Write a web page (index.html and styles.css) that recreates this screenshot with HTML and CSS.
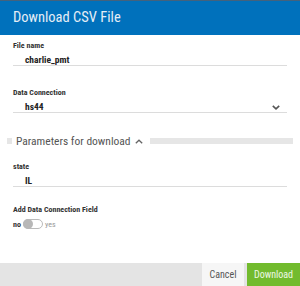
FILE: index.html
```html
<!DOCTYPE html>
<html>
<head>
<meta charset="utf-8">
<link rel="stylesheet" href="styles.css">
</head>
<body>
<div class="dialog">
  <div class="header">Download CSV File</div>
  <div class="content">
    <div class="field field-first">
      <div class="label">File name</div>
      <div class="value">charlie_pmt</div>
    </div>
    <div class="field">
      <div class="label">Data Connection</div>
      <div class="value select">
        <span>hs44</span>
        <svg class="chev" width="8" height="5" viewBox="0 0 8 5"><path d="M0.8 0.8 L4 3.8 L7.2 0.8" fill="none" stroke="#555" stroke-width="1.6"/></svg>
      </div>
    </div>
    <div class="section">
      <div class="band band-left"></div>
      <div class="legend">
        <span>Parameters for download</span>
        <svg class="chev-up" width="8" height="5" viewBox="0 0 8 5"><path d="M0.8 4.2 L4 1.2 L7.2 4.2" fill="none" stroke="#666" stroke-width="1.3"/></svg>
      </div>
      <div class="band band-right"></div>
    </div>
    <div class="field field-state">
      <div class="label">state</div>
      <div class="value">IL</div>
    </div>
    <div class="toggle-field">
      <div class="label">Add Data Connection Field</div>
      <div class="toggle-row">
        <span class="no">no</span>
        <span class="track"><span class="knob"></span></span>
        <span class="yes">yes</span>
      </div>
    </div>
  </div>
  <div class="footer">
    <button class="btn cancel">Cancel</button>
    <button class="btn download">Download</button>
  </div>
</div>
</body>
</html>
```
FILE: styles.css
```css
* { box-sizing: border-box; }
html, body { margin: 0; padding: 0; background: #fff; }
body {
  font-family: "Roboto Condensed", "Liberation Sans Narrow", "DejaVu Sans Condensed", Roboto, sans-serif;
  width: 300px;
  height: 286px;
  overflow: hidden;
}
.dialog {
  display: flex;
  flex-direction: column;
  height: 286px;
  border-top: 1px solid #44627d;
}
.header {
  background: #0071bc;
  color: #e4edf6;
  height: 34px;
  line-height: 34px;
  padding-left: 13px;
  font-size: 14.5px;
  flex: none;
}
.content {
  flex: 1;
  padding: 0 13px;
}
.field { border-bottom: 1px solid #dcdcdc; }
.field-first { margin-top: 6px; }
.field + .field { margin-top: 22px; }
.label {
  font-size: 8px;
  font-weight: bold;
  color: #333;
  line-height: 10px;
  height: 10px;
}
.value {
  font-size: 9.5px;
  font-weight: bold;
  color: #222;
  padding-left: 12px;
  line-height: 12px;
  height: 14px;
  padding-top: 3px;
}
.select {
  display: flex;
  justify-content: space-between;
  align-items: flex-start;
  padding-right: 7px;
}
.chev { margin-top: 4px; }
.section {
  display: flex;
  align-items: center;
  margin: 21px -6px 0 -6px;
  height: 14px;
}
.band { height: 6px; background: #e6e6e6; }
.band-left { width: 5px; flex: none; }
.band-right { flex: 1; }
.legend {
  display: flex;
  align-items: center;
  padding: 0 7px 0 4px;
  font-size: 11.5px;
  color: #555;
  line-height: 14px;
}
.chev-up { margin-left: 4px; }
.field-state { margin-top: 14px; }
.toggle-field { margin-top: 18px; }
.toggle-row {
  display: flex;
  align-items: center;
  margin-top: 3px;
  height: 12px;
}
.no { font-size: 8px; font-weight: bold; color: #333; }
.yes { font-size: 8px; color: #999; }
.track {
  width: 20px;
  height: 10px;
  border: 1px solid #bbb;
  border-radius: 6px;
  margin: 0 2px 0 2px;
  position: relative;
  background: #fff;
}
.knob {
  position: absolute;
  left: -1px;
  top: -1px;
  width: 10px;
  height: 10px;
  border-radius: 50%;
  background: #b8b8b8;
}
.footer {
  flex: none;
  height: 23px;
  background: #e4e4e4;
  display: flex;
  justify-content: flex-end;
  gap: 3px;
}
.btn {
  border: none;
  font-family: inherit;
  font-size: 10px;
  height: 23px;
  padding: 0;
  margin: 0;
}
.cancel { width: 42px; background: #f6f6f6; color: #555; }
.download { width: 53px; background: #72bb2e; color: #eef7e6; }
```
